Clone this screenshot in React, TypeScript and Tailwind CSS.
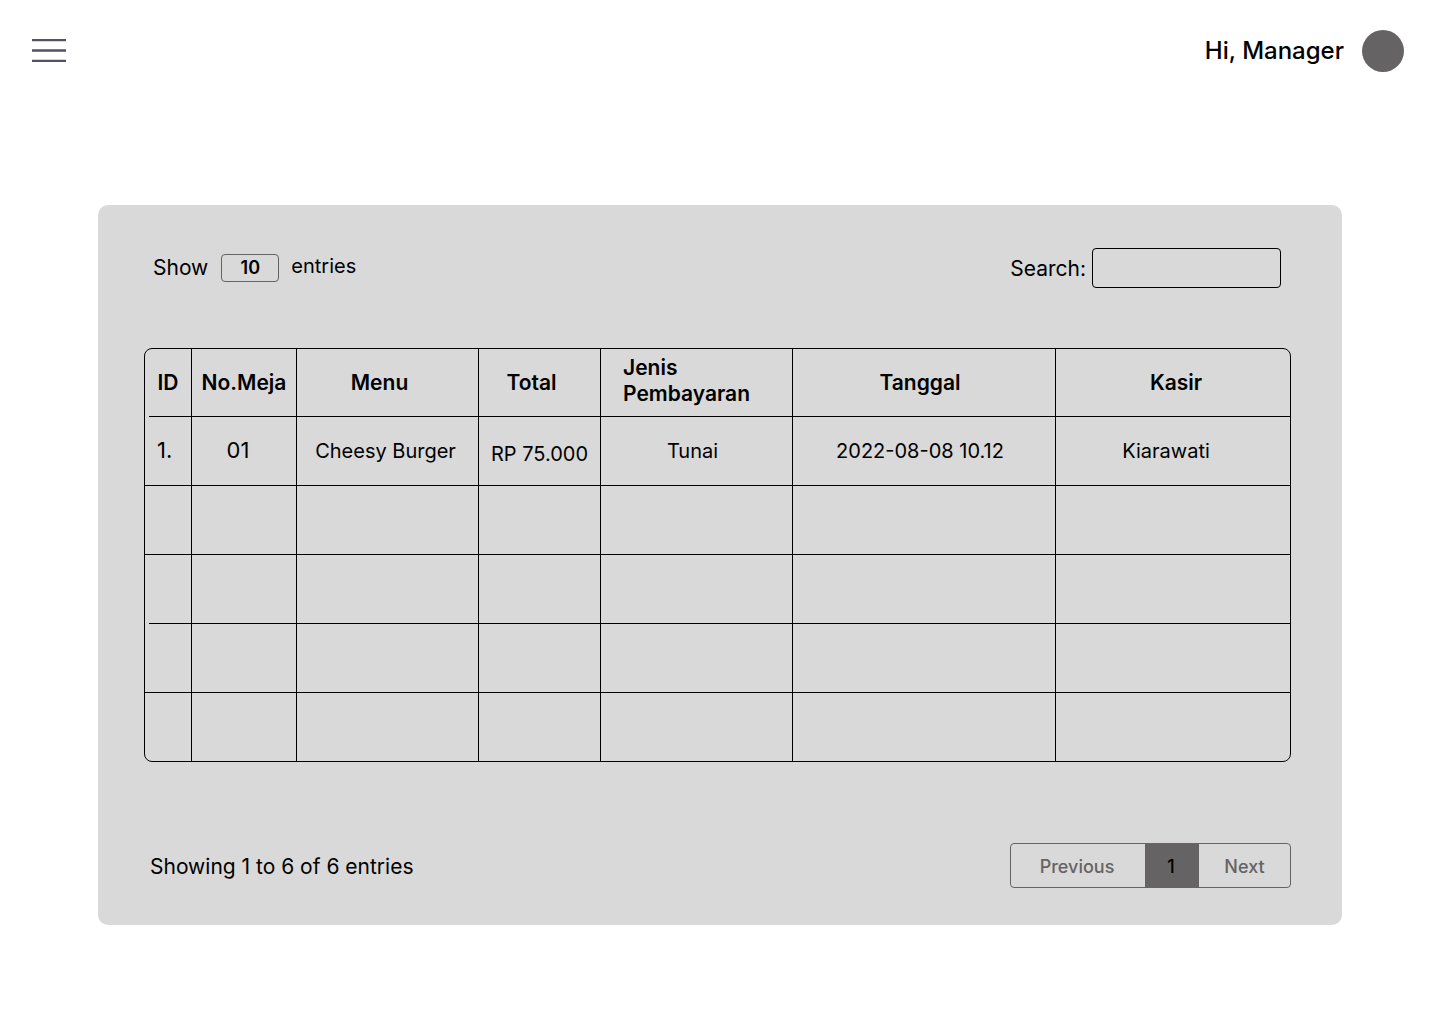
import { useState } from "react";

type Column = {
  label: string;
  width: string;
  head: string;
  cell: string;
};

const columns: Column[] = [
  { label: "ID", width: "w-[47px]", head: "text-center", cell: "pb-0.5 pl-3 text-left text-[22px]" },
  { label: "No.Meja", width: "w-[105px]", head: "text-center", cell: "pr-3 pb-0.5 text-center text-[22px]" },
  { label: "Menu", width: "w-[182px]", head: "pr-4 text-center", cell: "pr-1 text-center text-xl" },
  { label: "Total", width: "w-[122px]", head: "pr-4 text-center", cell: "pt-1.5 text-center text-xl" },
  { label: "Jenis Pembayaran", width: "w-[192px]", head: "px-[22px] pb-1 text-left", cell: "pr-2 text-center text-xl" },
  { label: "Tanggal", width: "w-[263px]", head: "pr-2 text-center", cell: "pr-2 text-center text-xl" },
  { label: "Kasir", width: "", head: "pl-1.5 text-center", cell: "pr-3.5 text-center text-xl" },
];

const rows: string[][] = [
  ["1.", "01", "Cheesy Burger", "RP 75.000", "Tunai", "2022-08-08 10.12", "Kiarawati"],
  ["", "", "", "", "", "", ""],
  ["", "", "", "", "", "", ""],
  ["", "", "", "", "", "", ""],
  ["", "", "", "", "", "", ""],
];

/* Row rule that starts a little inside the table's left edge. */
const insetRule =
  "relative after:absolute after:right-0 after:bottom-0 after:left-1 after:h-px after:bg-black";

function TopBar() {
  return (
    <header className="flex items-center justify-between pt-[30px] pr-9 pl-8">
      <button type="button" aria-label="Open menu" className="cursor-pointer">
        <svg width="34" height="24" viewBox="0 0 34 24" fill="none" stroke="#535163" strokeWidth="2.3">
          <path d="M0 1.2H34M0 11.5H34M0 21.8H34" />
        </svg>
      </button>
      <div className="flex items-center gap-[18px]">
        <span className="text-2xl font-medium">Hi, Manager</span>
        <span className="size-[42px] rounded-full bg-[#656363]" />
      </div>
    </header>
  );
}

function OrdersTable() {
  return (
    <div className="overflow-hidden rounded-lg border border-black">
      <table className="w-full table-fixed border-separate border-spacing-0 text-black">
        <colgroup>
          {columns.map((c) => (
            <col key={c.label} className={c.width} />
          ))}
        </colgroup>
        <thead>
          <tr className="h-[68px]">
            {columns.map((c, i) => (
              <th
                key={c.label}
                scope="col"
                className={`border-r border-black text-[21px] leading-[26px] font-semibold last:border-r-0 ${
                  i === 0 ? insetRule : "border-b"
                } ${c.head}`}
              >
                {c.label}
              </th>
            ))}
          </tr>
        </thead>
        <tbody>
          {rows.map((row, r) => (
            <tr key={r} className="group h-[69px] last:h-[68px]">
              {row.map((value, i) => (
                <td
                  key={i}
                  className={`border-r border-black leading-7 whitespace-nowrap group-last:border-b-0 last:border-r-0 ${
                    i === 0 && r === 2 ? insetRule : "border-b"
                  } ${columns[i].cell}`}
                >
                  {value}
                </td>
              ))}
            </tr>
          ))}
        </tbody>
      </table>
    </div>
  );
}

export default function App() {
  const [query, setQuery] = useState("");
  const [size, setSize] = useState("10");

  return (
    <div className="min-h-screen bg-white pb-24 font-['Inter',sans-serif] text-black">
      <TopBar />
      <main className="mx-[98px] mt-[133px] rounded-[10px] bg-[#d9d9d9] pt-[43px] pr-[51px] pb-[37px] pl-[46px]">
        <div className="flex items-center justify-between pr-[10px] pl-[9px]">
          <div className="flex items-center gap-3">
            <label htmlFor="size" className="pr-px text-[21px] leading-7">
              Show
            </label>
            <select
              id="size"
              value={size}
              onChange={(e) => setSize(e.target.value)}
              className="h-7 w-[58px] appearance-none rounded border border-[#656363] bg-transparent text-center text-lg leading-6 font-semibold [text-align-last:center]"
            >
              <option>10</option>
              <option>25</option>
              <option>50</option>
            </select>
            <span className="pb-1 text-xl leading-7">entries</span>
          </div>
          <div className="flex items-center gap-[6px]">
            <label htmlFor="search" className="pt-0.5 text-[21px] leading-7">
              Search:
            </label>
            <input
              id="search"
              type="text"
              value={query}
              onChange={(e) => setQuery(e.target.value)}
              className="h-10 w-[189px] rounded border border-black bg-transparent px-2 text-lg"
            />
          </div>
        </div>

        <div className="mt-[60px]">
          <OrdersTable />
        </div>

        <div className="mt-[81px] flex items-center justify-between pl-[6px]">
          <p className="pt-0.5 text-[21px] leading-7">Showing 1 to 6 of 6 entries</p>
          <nav
            aria-label="Pagination"
            className="flex h-[45px] overflow-hidden rounded border border-[#656363] text-lg font-medium text-[#656363]"
          >
            <button type="button" className="w-[134px] cursor-pointer pt-0.5 pr-0.5">
              Previous
            </button>
            <button type="button" aria-current="page" className="w-[54px] cursor-pointer bg-[#656363] pt-0.5 pr-0.5 text-black">
              1
            </button>
            <button type="button" className="w-[91px] cursor-pointer pt-0.5">
              Next
            </button>
          </nav>
        </div>
      </main>
    </div>
  );
}
